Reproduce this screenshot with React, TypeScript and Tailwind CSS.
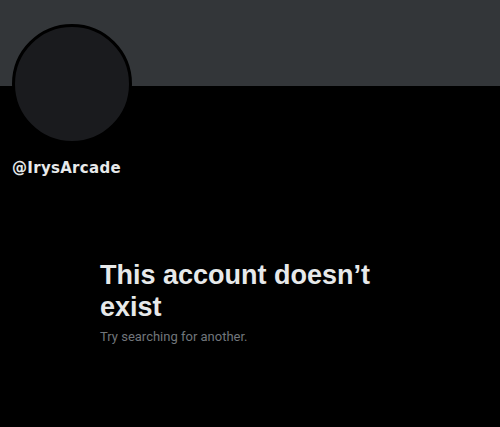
export default function App() {
  return (
    <div className="min-h-[427px] w-full bg-black" style={{ fontFamily: '"Liberation Sans", Arial, sans-serif' }}>
      {/* Banner */}
      <div className="h-[86px] w-full bg-[#333639]" />

      {/* Avatar + handle */}
      <div className="px-3">
        <div className="-mt-[62px] h-[120px] w-[120px] rounded-full border-[3px] border-black bg-[#1a1b1e]" />
        <div
          className="mt-[14px] text-[15px] font-bold leading-5 tracking-[0.3px] text-[#e7e9ea]"
          style={{ fontFamily: '"DejaVu Sans", sans-serif' }}
        >
          @IrysArcade
        </div>
      </div>

      {/* Empty state */}
      <div className="mx-auto mt-[81px] w-[300px]">
        <h2 className="text-[27px] font-bold leading-[32px] text-[#e7e9ea]">This account doesn’t exist</h2>
        <p
          className="mt-[6px] text-[13px] leading-4 text-[#71767b]"
          style={{ fontFamily: 'Roboto, sans-serif' }}
        >
          Try searching for another.
        </p>
      </div>
    </div>
  );
}
